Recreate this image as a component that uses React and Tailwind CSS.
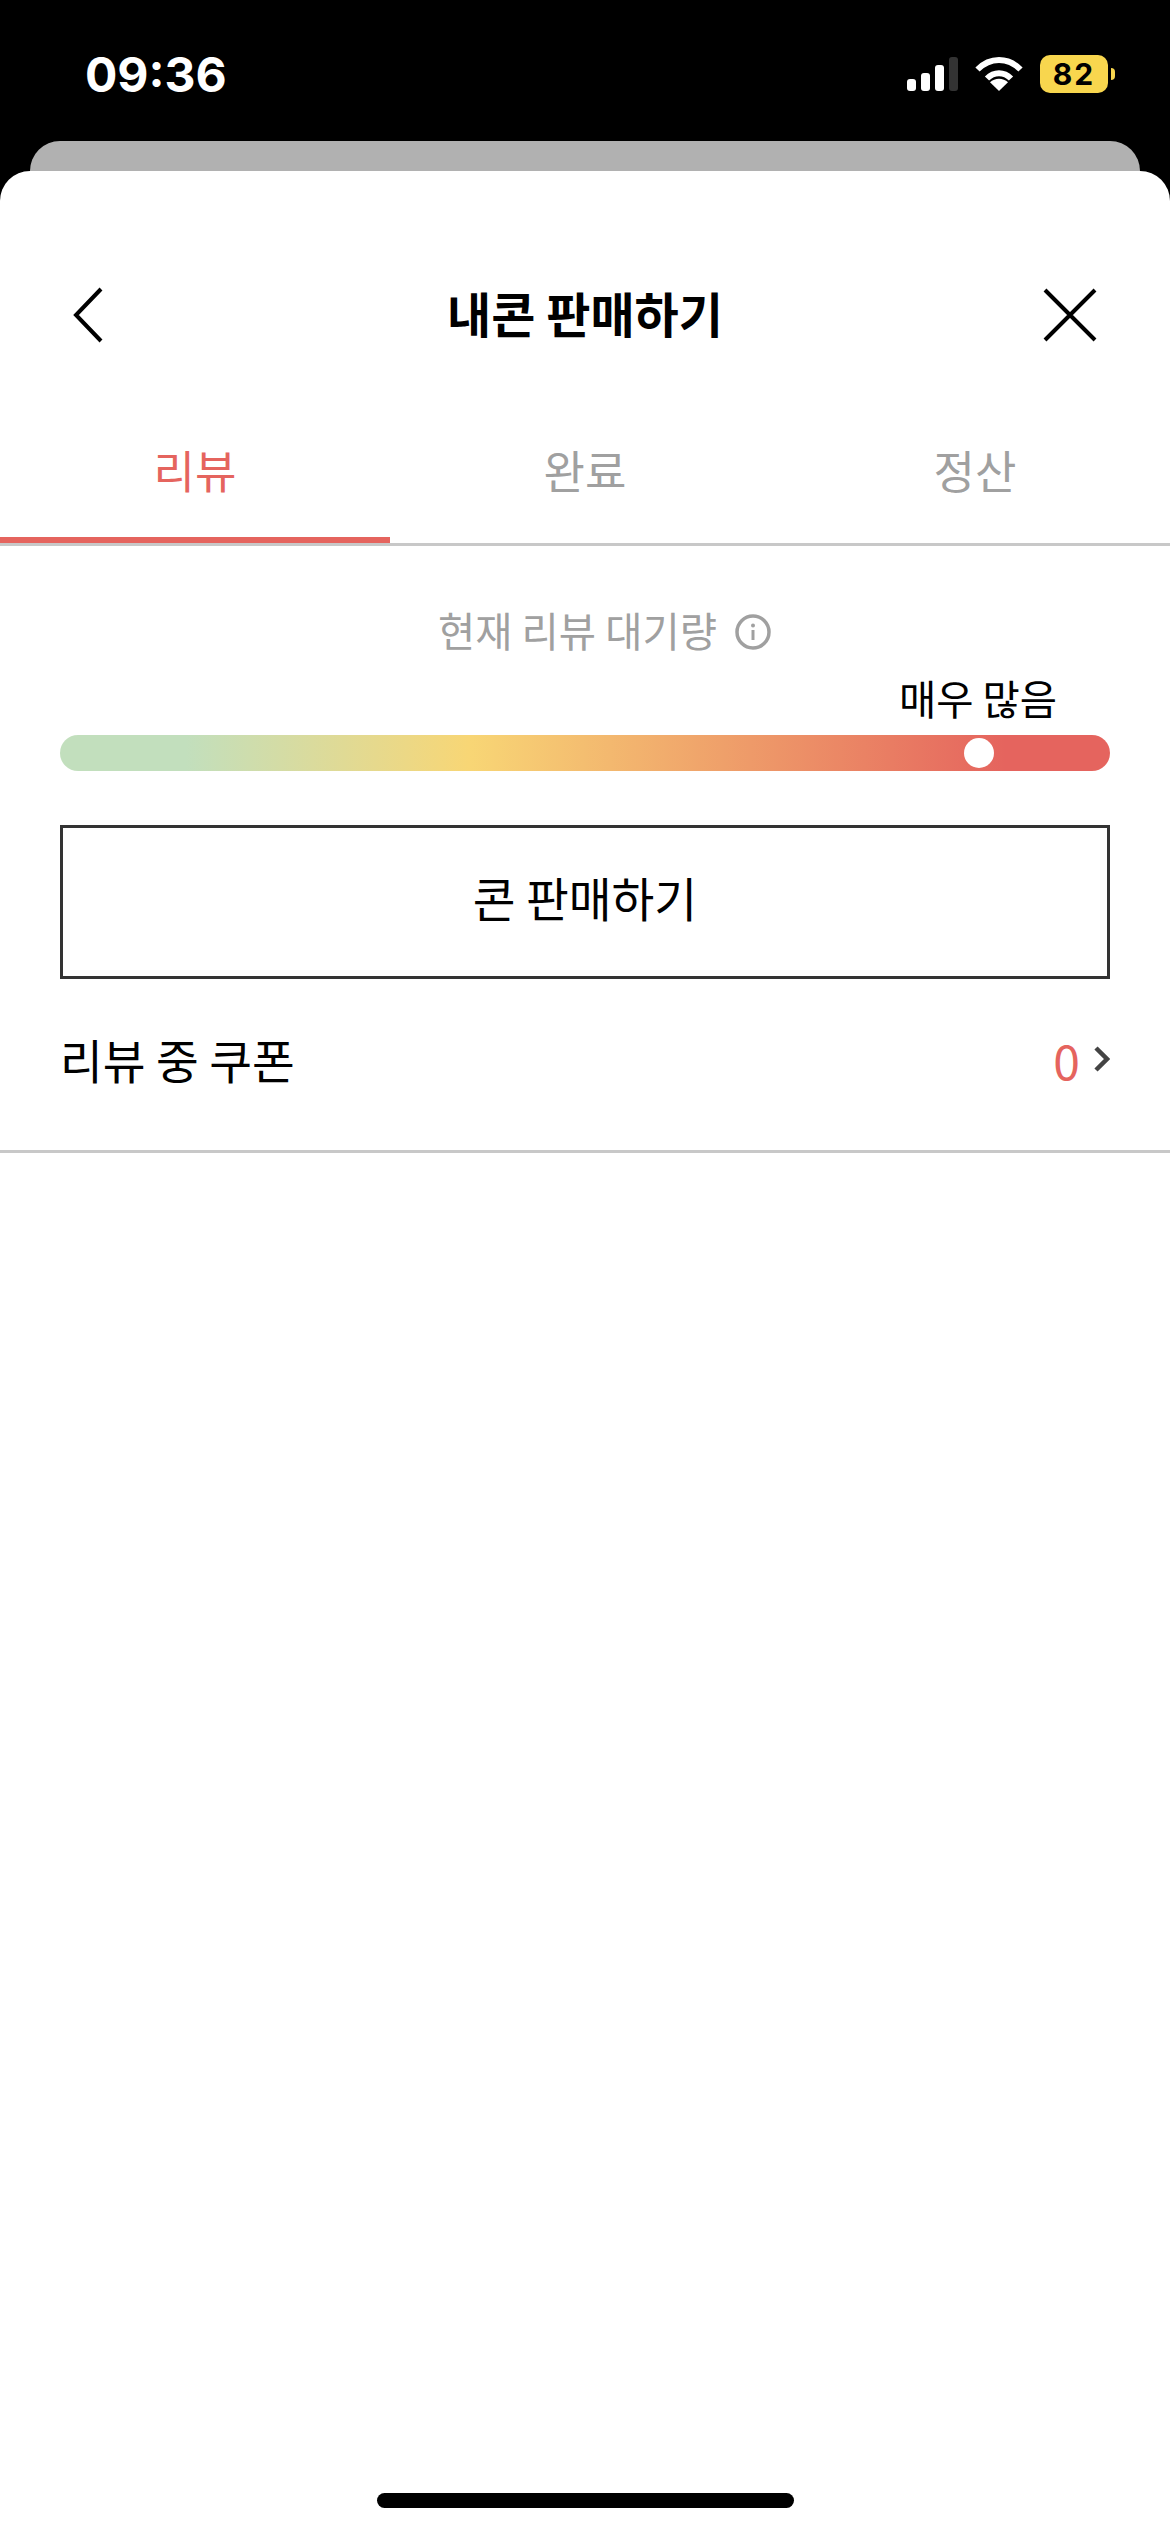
import React from 'react';

const tabs = ['리뷰', '완료', '정산'];

const StatusBar = () => (
  <div className="h-[141px] flex justify-between items-start pl-[85px] pr-[55px] pt-[56px]">
    <span className="font-['Inter',sans-serif] font-bold text-[48px] leading-[38px] text-white">09:36</span>
    <div className="flex items-start">
      <div className="flex items-end gap-[5px] h-[34px] mt-[1px]">
        <div className="w-[9px] h-[12px] rounded-[3px] bg-white" />
        <div className="w-[9px] h-[18px] rounded-[3px] bg-white" />
        <div className="w-[9px] h-[26px] rounded-[3px] bg-white" />
        <div className="w-[9px] h-[34px] rounded-[3px] bg-[#333333]" />
      </div>
      <svg className="ml-[17px]" width="48" height="35" viewBox="0 0 48 35" fill="none">
        <path d="M2.500 13.500C8.500 7.500 16 4 24 4s15.500 3.500 21.500 9.500" stroke="white" strokeWidth="6" />
        <path d="M12 22.500c3.300-3.300 7.500-5.200 12-5.200s8.700 1.900 12 5.200" stroke="white" strokeWidth="6" />
        <path d="M24 35l-9-8.700c2.400-2.200 5.600-3.500 9-3.500s6.600 1.300 9 3.500z" fill="white" />
      </svg>
      <div className="ml-[17px] -mt-[1px] w-[68px] h-[38px] rounded-[10px] bg-[#f8d64e] flex items-center justify-center font-['Inter',sans-serif] font-bold text-[30px] tracking-[2px] text-black">
        82
      </div>
      <div className="ml-[3px] mt-[12px] w-[4px] h-[12px] rounded-r-full bg-[#f8d64e]" />
    </div>
  </div>
);

const App = () => {
  return (
    <div className="h-[2532px] bg-black flex flex-col font-['Noto_Sans_CJK_KR',sans-serif] overflow-hidden">
      <StatusBar />
      <div className="h-[30px] mx-[30px] bg-[#b1b1b1] rounded-t-[30px]" />
      <div className="flex-1 bg-white rounded-t-[30px] flex flex-col">
        <div className="mt-[90px] h-[108px] grid grid-cols-[1fr_auto_1fr] items-center pl-[73px] pr-[73px]">
          <svg width="30" height="56" viewBox="0 0 30 56" fill="none">
            <path d="M28 2L3 28l25 26" stroke="black" strokeWidth="4" />
          </svg>
          <h1 className="pb-[6px] text-[48px] font-bold text-black">내콘 판매하기</h1>
          <svg className="justify-self-end" width="54" height="54" viewBox="0 0 54 54" fill="none">
            <path d="M2 2l50 50M52 2L2 52" stroke="black" strokeWidth="4" />
          </svg>
        </div>

        <div className="flex border-b-[3px] border-[#c8c8c8]">
          {tabs.map((tab, i) => (
            <div
              key={tab}
              className={
                i === 0
                  ? 'flex-1 h-[174px] pt-[71px] text-center text-[45px] leading-[60px] text-[#e5645e] border-b-[6px] border-[#e5645e]'
                  : 'flex-1 h-[174px] pt-[71px] text-center text-[45px] leading-[60px] text-[#a0a0a0]'
              }
            >
              {tab}
            </div>
          ))}
        </div>

        <div className="px-[60px] pt-[54px]">
          <div className="h-[60px] pl-[39px] flex items-center justify-center gap-[18px] text-[40.5px] leading-[60px] text-[#a0a0a0]">
            <span>현재 리뷰 대기량</span>
            <svg className="mt-[3px]" width="36" height="36" viewBox="0 0 36 36" fill="none">
              <circle cx="18" cy="18" r="16" stroke="#a0a0a0" strokeWidth="3.500" />
              <circle cx="18" cy="11.500" r="2" fill="#a0a0a0" />
              <path d="M18 16v10" stroke="#a0a0a0" strokeWidth="3" />
            </svg>
          </div>

          <div className="mt-[8px] h-[60px] flex justify-end pr-[53px] text-[40.5px] leading-[60px] text-black">매우 많음</div>

          <div className="relative mt-[7px] h-[36px] rounded-full bg-[linear-gradient(90deg,#c2dfbd_12%,#f8d675_39%,#e5645e_90%)]">
            <div className="absolute left-[904px] top-[3px] w-[30px] h-[30px] rounded-full bg-white" />
          </div>

          <button className="mt-[54px] w-full h-[154px] pb-[10px] border-[3px] border-[#333333] bg-white text-[46.500px] text-black">
            콘 판매하기
          </button>
        </div>

        <div className="h-[171px] mx-[60px] pb-[12px] flex items-center justify-between">
          <span className="text-[46.500px] text-black">리뷰 중 쿠폰</span>
          <div className="flex items-center gap-[14px]">
            <span className="text-[48px] leading-[60px] text-[#e5645e]">0</span>
            <svg width="16" height="26" viewBox="0 0 16 26" fill="none">
              <path d="M2 2l11 11L2 24" stroke="#444444" strokeWidth="4.500" />
            </svg>
          </div>
        </div>
        <div className="h-[3px] bg-[#c8c8c8]" />

        <div className="flex-1" />
        <div className="mb-[24px] mx-auto w-[417px] h-[15px] rounded-full bg-black" />
      </div>
    </div>
  );
};

export default App;
